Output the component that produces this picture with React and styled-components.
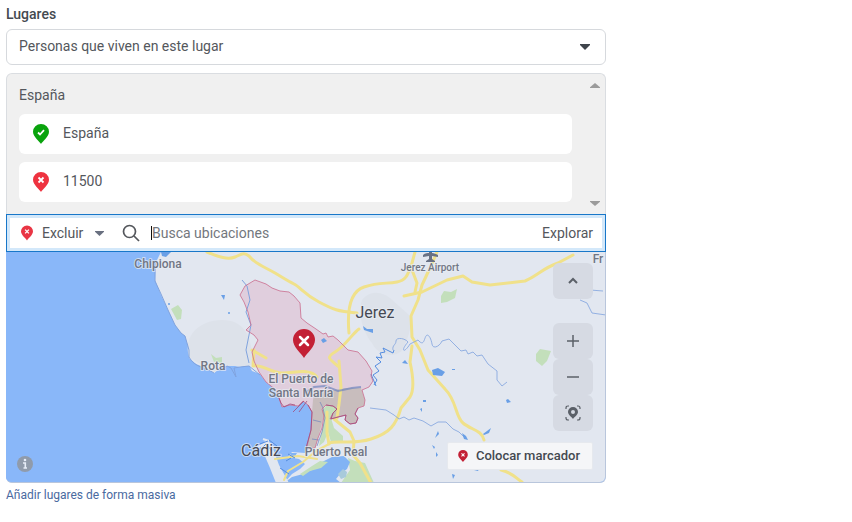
import React from "react";
import styled, { createGlobalStyle } from "styled-components";

const GlobalStyle = createGlobalStyle`
  *, *::before, *::after { box-sizing: border-box; }
  body {
    margin: 0;
    background: #fff;
    color: #54575c;
    font-family: Roboto, "Liberation Sans", sans-serif;
    font-size: 14px;
    line-height: 20px;
  }
  button, input, select { font: inherit; color: inherit; margin: 0; }
`;

const Page = styled.main`
  max-width: 612px;
  padding: 4px 6px 16px;
`;

const FieldLabel = styled.label`
  display: block;
  margin-bottom: 5px;
  font-weight: 500;
  color: #444950;
`;

const SelectBox = styled.div`
  display: grid;
  align-items: center;
  height: 36px;
  margin-bottom: 8px;
`;

const PlaceSelect = styled.select`
  grid-area: 1 / 1;
  width: 100%;
  height: 100%;
  padding: 0 40px 2px 12px;
  border: 1px solid #d6d9dd;
  border-radius: 6px;
  background: #fff;
  appearance: none;
`;

const Arrow = styled.svg`
  grid-area: 1 / 1;
  justify-self: end;
  flex: none;
  width: ${(p) => p.$width}px;
  height: ${(p) => p.$height}px;
  margin-right: ${(p) => p.$gap || 0}px;
  fill: ${(p) => p.$color};
  pointer-events: none;
`;

const Panel = styled.section`
  border-radius: 6px;
`;

const Selected = styled.div`
  display: flex;
  border: 1px solid #dadde1;
  border-bottom: 0;
  border-radius: 6px 6px 0 0;
  background: #f0f0f0;
`;

const SelectedBody = styled.div`
  flex: 1;
  min-width: 0;
  padding: 11px 12px 12px;
`;

const GroupTitle = styled.h2`
  margin: 0 0 9px;
  font-size: 14px;
  line-height: 20px;
  font-weight: 400;
`;

const PlaceList = styled.ul`
  display: grid;
  gap: 8px;
  margin: 0;
  padding: 0;
  list-style: none;
`;

const PlaceRow = styled.li`
  display: flex;
  align-items: center;
  gap: 14px;
  height: 40px;
  padding: 0 14px;
  border-radius: 6px;
  background: #fff;
`;

const PlaceName = styled.span`
  padding-bottom: 2px;
`;

const ScrollTrack = styled.div`
  display: flex;
  flex-direction: column;
  justify-content: space-between;
  align-items: center;
  width: 21px;
  padding: 9px 0 8px;
`;

const SearchBar = styled.div`
  display: flex;
  align-items: center;
  height: 38px;
  padding: 0 8px;
  border: 1px solid #1877c9;
  background: #fff;
  box-shadow: inset 0 0 0 3px #d3e8fa;
`;

const ModeBox = styled.label`
  display: flex;
  align-items: center;
  gap: 9px;
  padding-left: 6px;
`;

const ModeSelect = styled.select`
  width: 44px;
  height: 20px;
  padding: 0 0 2px;
  border: 0;
  background: none;
  appearance: none;
`;

const SearchField = styled.label`
  display: flex;
  flex: 1;
  align-items: center;
  min-width: 0;
  margin-left: 18px;
`;

const Caret = styled.span`
  width: 1px;
  height: 14px;
  margin-left: 11px;
  background: #111;
`;

const SearchInput = styled.input`
  flex: 1;
  min-width: 0;
  padding: 0;
  border: 0;
  outline: 0;
  background: none;
  &::placeholder { color: #73777d; opacity: 1; }
`;

const BrowseButton = styled.button`
  padding: 0 4px;
  border: 0;
  background: none;
  cursor: pointer;
`;

const MapFrame = styled.div`
  position: relative;
  height: 231px;
  overflow: hidden;
  border: solid #b9c6dc;
  border-width: 0 1px 1px 0;
  border-radius: 0 0 6px 6px;
  background: #89b7f9;
`;

const MapDrawing = styled.svg`
  display: block;
  width: 100%;
  height: 100%;
`;

const MapLabel = styled.text`
  fill: ${(p) => p.$color || "#717684"};
  stroke: #e9edf4;
  stroke-opacity: 0.7;
  stroke-width: 2px;
  stroke-linejoin: round;
  paint-order: stroke;
  font-size: ${(p) => p.$size}px;
  font-weight: ${(p) => p.$weight || 500};
  text-anchor: middle;
`;

const Controls = styled.div`
  position: absolute;
  top: 11px;
  right: 12px;
  display: grid;
  gap: 24px;
`;

const ControlGroup = styled.div`
  display: grid;
`;

const MapButton = styled.button`
  display: grid;
  place-items: center;
  width: 40px;
  height: 36px;
  padding: 0;
  border: 0;
  border-radius: 6px;
  background: #d6dae3;
  color: #5b6068;
  cursor: pointer;
`;

const MarkerButton = styled.button`
  position: absolute;
  right: 12px;
  bottom: 12px;
  display: flex;
  align-items: center;
  gap: 8px;
  height: 28px;
  padding: 0 12px 0 10px;
  border: 1px solid #e6e9ee;
  border-radius: 2px;
  background: #f5f6f8;
  color: #444950;
  font-size: 13px;
  font-weight: 500;
  cursor: pointer;
`;

const InfoButton = styled.button`
  position: absolute;
  left: 11px;
  bottom: 10px;
  display: grid;
  padding: 0;
  border: 0;
  background: none;
  cursor: pointer;
`;

const BulkLink = styled.a`
  display: inline-block;
  margin-top: 2px;
  color: #4a6a9f;
  font-size: 12px;
  text-decoration: none;
`;

const PIN = "M8 20 C7 18 0 12.800 0 7.800 A8 7.800 0 0 1 16 7.800 C16 12.800 9 18 8 20Z";

function Pin({ width, height, color, check }) {
  return (
    <svg width={width} height={height} viewBox="0 0 16 20" aria-hidden="true">
      <path d={PIN} fill={color} />
      <path
        d={check ? "M5 8.500 7 10.500 11 6.200" : "M5.500 5.500 10.500 10.500M10.500 5.500 5.500 10.500"}
        fill="none"
        stroke="#fff"
        strokeWidth="1.800"
      />
    </svg>
  );
}

function Triangle({ up, width = 10, height = 6, color = "#9b9b9b", gap }) {
  return (
    <Arrow
      $width={width}
      $height={height}
      $color={color}
      $gap={gap}
      viewBox="0 0 10 6"
      preserveAspectRatio="none"
      aria-hidden="true"
    >
      <path d={up ? "M0 6V5L5 0 10 5V6Z" : "M0 0H10V1L5 6 0 1Z"} />
    </Arrow>
  );
}

const EXCLUDED =
  "M255 280 266 284 272 288 280 291 289 292 294 296 300 303 301 318 307 323 316 329 323 334 326 333 328 337 333 336 338 340 348 350 358 352 366 361 372 371 371 376 373 381 369 387 362 390 365 400 364 406 358 408 355 414 358 418 356 423 350 424 345 420 346 415 338 417 330 419 333 413 337 409 333 406 326 405 322 409 324 416 322 428 318 438 315 448 306 449 311 430 312 412 308 405 303 401 298 406 290 405 282 407 279 398 276 390 266 382 259 372 254 361 252 352 258 340 254 335 246 330 251 325 248 312 244 302 240 295 245 286Z";

const CADIZ_SPIT = "M261 447 265 441 271 443 275 454 279 465 289 483H276L270 468Z";

function MapArt() {
  return (
    <MapDrawing viewBox="6 252 599 230" preserveAspectRatio="xMidYMid slice" role="img" aria-label="Mapa de Cádiz y Jerez">
      <rect x="6" y="252" width="600" height="231" fill="#89b7f9" />
      <path
        d="M161 252 156 262 155 280 161 295 168 310 175 325 181 333 185 336 189 350 189 358 196 364 206 368 214 373 218 370 222 366 230 365 235 366 240 367 249 365 252 371 260 374 266 382 276 390 279 398 282 407 290 405 298 406 303 401 308 405 312 412 311 430 308 445 305 453 292 452 288 457 299 459 305 464 300 469 292 474 284 483H606V252Z"
        fill="#e2e7f0"
      />
      <path d="M189 357C183 335 200 320 222 320S250 336 252 352L254 363 249 366 234 366 222 366 214 373Z" fill="#dde2ea" />
      <path d="M362 300C371 288 385 293 391 299L409 315C414 326 406 343 402 350S379 358 372 343C364 333 357 315 362 300Z" fill="#dde2ea" />
      <g fill="#c3dfbb">
        <path d="M171 309 178 305 182 310 181 319 177 320Z" />
        <path d="M211 354 216 358 222 357 222 363 214 362Z" />
        <path d="M441 296 444 291 451 292 457 289 455 298 447 302 441 303Z" />
        <path d="M536 354 540 349 551 351 547 361 542 366 536 361Z" />
        <path d="M322 410 327 405 334 406 337 410 331 418 334 428 343 436 343 441 331 442 328 432 324 442 319 446 324 420Z" />
        <path d="M348 458 355 461 365 463 374 483H341L350 470Z" />
      </g>
      <path d="M303 474 314 469 322 462 332 457 344 456 350 462 347 469 340 474 336 479 341 483H284L292 477Z" fill="#82b3f4" />
      <path d="M300 474 312 466 320 461 328 462 321 468 310 471 303 476Z" fill="#c3dfbb" />
      <path d="M338 474 343 469 347 472 346 477 341 479Z" fill="#a8cadb" />
      <path d={CADIZ_SPIT} fill="#e2e7f0" />
      <g fill="none" stroke="#e2e7f0" strokeWidth="2">
        <path d="M266 443 256 448M266 441 273 447 280 450M263 439 269 441" />
      </g>
      <path d="M289 453 297 453 294 458Z" fill="#82b3f4" />
      <path d={EXCLUDED} fill="rgba(222,108,145,.2)" />
      <path
        d="M315 390 330 391 345 388 361 388 365 400 364 406 358 408 355 414 358 418 356 423 350 424 345 420 346 415 330 419 337 409 333 406 326 405 322 409 324 416 318 438 315 448 306 449 311 430 312 412 313 400Z"
        fill="#a5a48f"
        fillOpacity=".4"
      />
      <g fill="none" stroke="#f0e18a" strokeWidth="3" strokeLinecap="round" strokeLinejoin="round">
        <path d="M207 252C219 257 228 260 235 257S244 252 249 256C255 264 265 267 275 273S288 281 294 284 304 294 319 302 337 311 357 313" />
        <path d="M349 333C347 311 349 292 364 287S386 284 397 282 408 272 412 263L415 252M412 270 417 283 415 292" />
        <path d="M359 329C353 333 345 346 335 352S330 359 339 367" />
        <path d="M437 252 430 268 422 285 418 300 411 316 412 337 420 350 428 370 445 389C457 401 455 416 463 423S482 430 484 440M501 470C511 472 516 478 522 482" />
        <path d="M404 296 422 292 447 280 463 276 472 282 490 285 525 281C537 276 543 268 558 263L573 255" />
        <path d="M412 346 410 362C412 371 415 389 410 397L401 408C396 425 390 433 371 439S341 440 329 443" />
        <path d="M254 350 253 366C261 364 270 372 281 373S309 367 317 377M339 361 341 387 339 404 337 418M327 412V433L329 444M334 419 350 432 354 441 353 455 360 463 371 483" />
        <path d="M329 444 316 451 303 462 288 471 284 480M275 459 298 456 317 459" strokeWidth="2" />
        <path d="M252 350 266 358" />
      </g>
      <g fill="none" stroke="#80a3de" strokeWidth="1" strokeLinejoin="round">
        <path d="M155 262V281L161 294 168 310 175 325 181 333 185 336 189 350V357" />
        <path d="M189 357C195 368 205 367 214 373M220 371 227 366 231 368 236 377 234 368 240 367 249 366 254 370 260 375" />
        <path d="M242 280 247 286 250 300 246 312 251 325 249 335 246 350 249 363" />
        <path d="M393 350C392 345 396 345 396 341S405 338 408 342C400 351 404 354 410 344L418 340C424 347 424 339 426 336S431 338 432 344 440 346 442 341L449 339 457 347 461 351 466 350 468 354 473 352 477 356 482 355 488 364 497 371V380L502 386 507 382" strokeOpacity=".8" />
        <path d="M370 408 386 410 394 415 399 419 404 417 409 420 414 418 423 421 431 426 438 422 446 422 453 429 459 432 465 438M580 300 587 303 592 313 606 315M588 297 590 290 603 291" strokeOpacity=".8" />
      </g>
      <g fill="none" stroke="#538ce0" strokeWidth="1" strokeLinejoin="round">
        <path d="M374 385 377 380 373 375 379 371 375 366 381 362 376 357 382 358 380 353 385 352 383 348 393 353 394 350M371 374 376 386" />
        <path d="M261 449 266 444 272 451M257 445 268 441M269 440 277 446M288 454 295 458M286 461 291 458M280 468 289 474" />
      </g>
      <g fill="none" stroke="#6e84bd" strokeWidth="2" strokeOpacity=".7">
        <path d="M305 393 314 387 325 386 338 391 352 388 361 387" />
        <path d="M320 402 323 408 325 418 322 432 317 446M313 420 321 422M312 439 319 440" strokeWidth="1" />
      </g>
      <g fill="#699fe6">
        <path d="M432 370 438 368 445 372 442 376 433 375Z" />
        <path d="M363 326 367 329 373 329 373 333 364 330Z" />
        <path d="M402 363 405 360 408 364Z" />
        <path d="M221 295 225 295 224 300Z" />
        <path d="M161 252 171 252 166 257 162 256Z" />
        <path d="M483 434 491 428 489 433 484 435Z" />
        <path d="M462 433 466 436 468 440 464 439Z" />
        <path d="M321 340 324 338 327 341 323 343Z" />
        <path d="M435 438 438 431 439 434Z" />
        <path d="M432 445 435 447 434 449ZM436 452 438 455 436 457Z" />
        <path d="M506 400 508 399 511 402 507 403ZM452 474 455 475 453 479ZM474 470 479 469 478 471Z" />
        <path d="M452 369H455V370H452ZM423 400H426V402H423ZM420 409 422 408V412Z" />
        <circle cx="229" cy="313" r="1" />
        <circle cx="169" cy="304" r="1" />
      </g>
      <path d={EXCLUDED} fill="none" stroke="#cb6d8f" strokeOpacity=".8" />
      <path
        d="M279 398 281 403 284 407 290 404 295 405M293 412 304 401M299 412 307 401M308 405 312 412 311 430 306 448M326 405 333 406 337 409 333 413 331 419 338 417 346 415 345 420 350 424 356 423 358 418 355 414 358 408"
        fill="none"
        stroke="#a24a7c"
        strokeOpacity=".8"
      />
      <path d="M423 255C425 253 428 253 429 253V252H432V253C434 253 436 254 438 255V257L432 256V259L435 261V262H426V261L429 259V256L423 257Z" fill="#687184" />
      <MapLabel x="158" y="268" $size="12">Chipiona</MapLabel>
      <MapLabel x="213" y="370" $size="12">Rota</MapLabel>
      <MapLabel x="301" y="383" $size="12">El Puerto de</MapLabel>
      <MapLabel x="301" y="397" $size="12">Santa María</MapLabel>
      <MapLabel x="336" y="456" $size="12">Puerto Real</MapLabel>
      <MapLabel x="430" y="271" $size="10">Jerez Airport</MapLabel>
      <MapLabel x="375" y="318" $size="16" $weight={400} $color="#454954">Jerez</MapLabel>
      <MapLabel x="261" y="456" $size="16" $weight={400} $color="#454954">Cádiz</MapLabel>
      <MapLabel x="598" y="263" $size="12">Fr</MapLabel>
      <g transform="translate(293 329)">
        <path d="M11 29C8 24 0 18 0 11A11 11 0 0 1 22 11C22 18 14 24 11 29Z" fill="#c32035" />
        <path d="M7 8 15 16M15 8 7 16" stroke="#fff" strokeWidth="2.500" strokeLinecap="round" />
      </g>
    </MapDrawing>
  );
}

const glyph = { fill: "none", stroke: "currentColor", strokeWidth: 2, "aria-hidden": true };

const places = [
  { name: "España", included: true },
  { name: "11500", included: false },
];

export default function App() {
  return (
    <>
      <GlobalStyle />
      <Page>
        <FieldLabel htmlFor="audience">Lugares</FieldLabel>
        <SelectBox>
          <PlaceSelect id="audience">
            <option>Personas que viven en este lugar</option>
          </PlaceSelect>
          <Triangle color="#3f444b" gap={16} />
        </SelectBox>
        <Panel>
          <Selected>
            <SelectedBody>
              <GroupTitle>España</GroupTitle>
              <PlaceList>
                {places.map((place) => (
                  <PlaceRow key={place.name}>
                    <Pin width={16} height={20} color={place.included ? "#09a30d" : "#ee3340"} check={place.included} />
                    <PlaceName>{place.name}</PlaceName>
                  </PlaceRow>
                ))}
              </PlaceList>
            </SelectedBody>
            <ScrollTrack>
              <Triangle up height={5} />
              <Triangle height={5} />
            </ScrollTrack>
          </Selected>
          <SearchBar>
            <ModeBox>
              <Pin width={12} height={16} color="#e93544" />
              <ModeSelect aria-label="Incluir o excluir">
                <option>Excluir</option>
              </ModeSelect>
              <Triangle width={9} height={5} color="#697080" />
            </ModeBox>
            <SearchField>
              <svg {...glyph} width="18" height="18" viewBox="0 0 18 18" strokeWidth="1.700">
                <circle cx="7.500" cy="7.500" r="6" />
                <path d="M12 12 17 17" />
              </svg>
              <Caret />
              <SearchInput aria-label="Busca ubicaciones" placeholder="Busca ubicaciones" />
            </SearchField>
            <BrowseButton type="button">Explorar</BrowseButton>
          </SearchBar>
          <MapFrame>
            <MapArt />
            <Controls>
              <MapButton type="button" aria-label="Contraer mapa">
                <svg {...glyph} width="12" height="8" viewBox="0 0 12 8"><path d="M2 6 6 2 10 6" /></svg>
              </MapButton>
              <ControlGroup>
                <MapButton type="button" aria-label="Acercar">
                  <svg {...glyph} width="12" height="12" viewBox="0 0 12 12" strokeWidth="1.500"><path d="M0 6H12M6 0V12" /></svg>
                </MapButton>
                <MapButton type="button" aria-label="Alejar">
                  <svg {...glyph} width="12" height="12" viewBox="0 0 12 12" strokeWidth="1.500"><path d="M0 6H12" /></svg>
                </MapButton>
                <MapButton type="button" aria-label="Centrar marcador">
                  <svg {...glyph} width="16" height="16" viewBox="0 0 16 16" strokeWidth="1.200">
                    <path d="M1 4V3Q1 1 3 1H4M12 1H13Q15 1 15 3V4M15 12V13Q15 15 13 15H12M4 15H3Q1 15 1 13V12" />
                    <path d="M8 14C7 12 3 10 3 7A5 5 0 0 1 13 7C13 10 9 12 8 14ZM8 5A2 2 0 1 0 8 9A2 2 0 1 0 8 5Z" fill="currentColor" fillRule="evenodd" stroke="none" />
                  </svg>
                </MapButton>
              </ControlGroup>
            </Controls>
            <MarkerButton type="button">
              <Pin width={10} height={12} color="#c32035" />
              Colocar marcador
            </MarkerButton>
            <InfoButton type="button" aria-label="Información del mapa">
              <svg width="16" height="16" viewBox="0 0 16 16" aria-hidden="true">
                <circle cx="8" cy="8" r="8" fill="#909bab" />
                <circle cx="8" cy="4" r="1.300" fill="#e6edf8" />
                <path d="M6 7H8.300V12M6.500 12H10" fill="none" stroke="#e6edf8" strokeWidth="1.600" />
              </svg>
            </InfoButton>
          </MapFrame>
        </Panel>
        <BulkLink href="#masiva">Añadir lugares de forma masiva</BulkLink>
      </Page>
    </>
  );
}
